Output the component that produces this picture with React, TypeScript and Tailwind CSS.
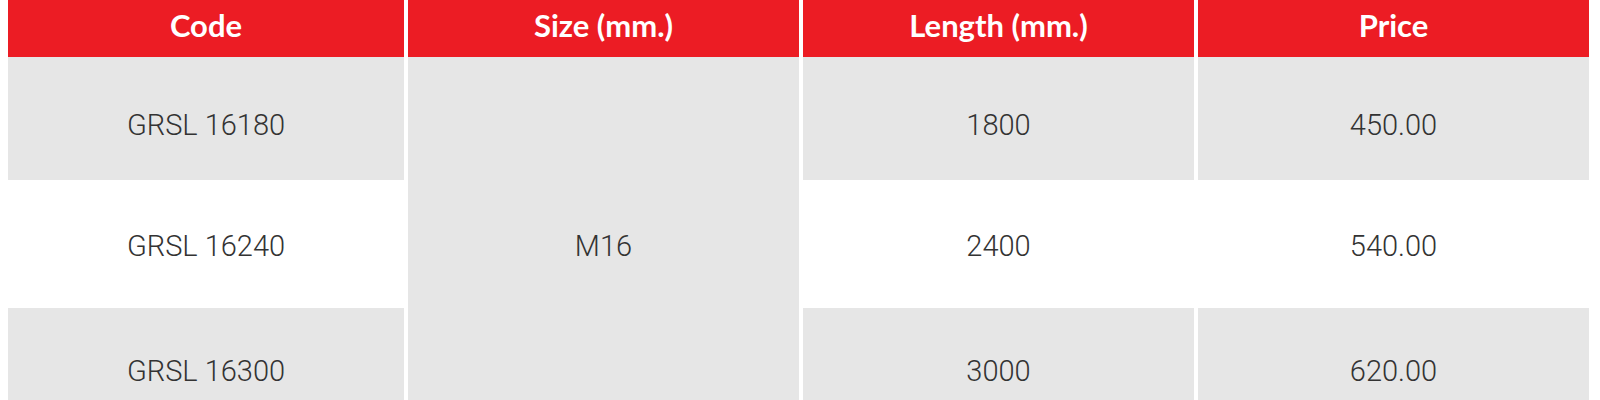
const rows = [
  { code: 'GRSL 16180', length: '1800', price: '450.00', bg: 'bg-[#e6e6e6]', pad: 'pt-[14px]' },
  { code: 'GRSL 16240', length: '2400', price: '540.00', bg: 'bg-white', pad: 'pt-[6px]' },
  { code: 'GRSL 16300', length: '3000', price: '620.00', bg: 'bg-[#e6e6e6]', pad: 'pt-[5px]' },
];

const headers = ['Code', 'Size (mm.)', 'Length (mm.)', 'Price'];

export default function App() {
  return (
    <div className="w-[1600px] h-[400px] overflow-hidden bg-white pl-[8px]">
      <div className="grid w-[1581px] grid-cols-[396px_1fr_1fr_1fr] grid-rows-[57px_123px_128px_122px] gap-x-[4px]">
        {/* Header */}
        {headers.map((h) => (
          <div
            key={h}
            className="bg-[#ec1c24] text-white flex items-center justify-center pb-[6px] font-['Lato',sans-serif] font-bold text-[31px]"
          >
            {h}
          </div>
        ))}

        {/* Body */}
        {rows.map((r, i) => (
          <div key={r.code} className="contents">
            <div
              className={`${r.bg} ${r.pad} flex items-center justify-center font-['Roboto',sans-serif] font-light text-[29px] text-[#333]`}
            >
              {r.code}
            </div>
            {i === 0 && (
              <div className="row-span-3 bg-[#e6e6e6] flex items-center justify-center pt-[7px] font-['Roboto',sans-serif] font-light text-[29px] text-[#333]">
                M16
              </div>
            )}
            <div
              className={`${r.bg} ${r.pad} flex items-center justify-center font-['Roboto',sans-serif] font-light text-[29px] text-[#333]`}
            >
              {r.length}
            </div>
            <div
              className={`${r.bg} ${r.pad} flex items-center justify-center font-['Roboto',sans-serif] font-light text-[29px] text-[#333]`}
            >
              {r.price}
            </div>
          </div>
        ))}
      </div>
    </div>
  );
}
